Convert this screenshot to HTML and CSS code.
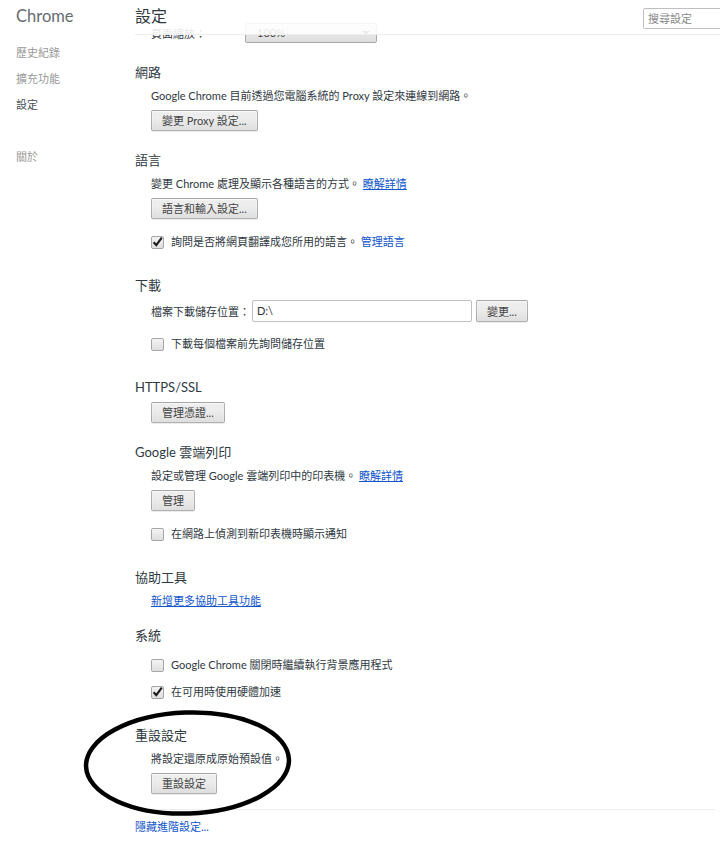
FILE: index.html
```html
<!DOCTYPE html>
<html lang="zh-Hant">
<head>
<meta charset="utf-8">
<title>設定</title>
<link rel="stylesheet" href="styles.css">
</head>
<body>
<div class="page">
  <aside class="sidebar">
    <div class="brand">Chrome</div>
    <ul class="nav">
      <li>歷史紀錄</li>
      <li>擴充功能</li>
      <li class="active">設定</li>
      <li class="about">關於</li>
    </ul>
  </aside>
  <main class="main">
    <header class="header">
      <h1>設定</h1>
      <div class="search">搜尋設定</div>
    </header>
    <div class="content">
      <div class="zoom-row">
        <span class="zoom-label">頁面縮放：</span>
        <div class="select">100%<span class="arrow"></span></div>
      </div>

      <section class="section">
        <h3>網路</h3>
        <div class="desc">Google Chrome 目前透過您電腦系統的 Proxy 設定來連線到網路。</div>
        <div class="btn-row"><button class="btn">變更 Proxy 設定...</button></div>
      </section>

      <section class="section">
        <h3>語言</h3>
        <div class="desc">變更 Chrome 處理及顯示各種語言的方式。 <a href="#" class="ul">瞭解詳情</a></div>
        <div class="btn-row"><button class="btn">語言和輸入設定...</button></div>
        <div class="check"><span class="box"><svg width="14" height="14" viewBox="0 0 14 14"><path d="M2.6 7.2 L5.3 10.2 L10.8 2.6" fill="none" stroke="#1a1a1a" stroke-width="2.1"/></svg></span><span>詢問是否將網頁翻譯成您所用的語言。 <a href="#" class="plain">管理語言</a></span></div>
      </section>

      <section class="section">
        <h3>下載</h3>
        <div class="field-row">
          <span class="field-label">檔案下載儲存位置：</span>
          <div class="input">D:\</div>
          <button class="btn">變更...</button>
        </div>
        <div class="check"><span class="box"></span><span>下載每個檔案前先詢問儲存位置</span></div>
      </section>

      <section class="section">
        <h3>HTTPS/SSL</h3>
        <div class="btn-row"><button class="btn">管理憑證...</button></div>
      </section>

      <section class="section">
        <h3>Google 雲端列印</h3>
        <div class="desc">設定或管理 Google 雲端列印中的印表機。 <a href="#" class="ul">瞭解詳情</a></div>
        <div class="btn-row"><button class="btn">管理</button></div>
        <div class="check"><span class="box"></span><span>在網路上偵測到新印表機時顯示通知</span></div>
      </section>

      <section class="section tight">
        <h3>協助工具</h3>
        <div class="desc"><a href="#" class="ul">新增更多協助工具功能</a></div>
      </section>

      <section class="section">
        <h3>系統</h3>
        <div class="check"><span class="box"></span><span>Google Chrome 關閉時繼續執行背景應用程式</span></div>
        <div class="check"><span class="box"><svg width="14" height="14" viewBox="0 0 14 14"><path d="M2.6 7.2 L5.3 10.2 L10.8 2.6" fill="none" stroke="#1a1a1a" stroke-width="2.1"/></svg></span><span>在可用時使用硬體加速</span></div>
      </section>

      <section class="section">
        <h3>重設設定</h3>
        <div class="desc">將設定還原成原始預設值。</div>
        <div class="btn-row"><button class="btn">重設設定</button></div>
      </section>

      <div class="divider"></div>
      <div class="bottom-link"><a href="#" class="plain">隱藏進階設定...</a></div>
    </div>
  </main>
</div>
<svg class="annotation" width="212" height="110" viewBox="0 0 212 110">
  <ellipse cx="105.5" cy="54" rx="101.5" ry="50.5" fill="none" stroke="#000" stroke-width="4.5" transform="rotate(-2 105.5 54)"/>
</svg>
</body>
</html>
```

FILE: styles.css
```css
html, body {
  margin: 0;
  padding: 0;
}
body {
  font-family: Lato, "Noto Sans CJK TC", sans-serif;
  font-size: 11px;
  color: #303942;
  background: #fff;
  overflow: hidden;
  position: relative;
  width: 720px;
  height: 853px;
}
.page {
  display: flex;
  width: 720px;
  height: 853px;
}
.sidebar {
  width: 135px;
  flex: none;
  padding-left: 16px;
  box-sizing: border-box;
}
.brand {
  font-size: 16.5px;
  line-height: 20px;
  margin-top: 6px;
  color: #666b70;
}
.nav {
  list-style: none;
  margin: 14px 0 0;
  padding: 0;
}
.nav li {
  line-height: 26px;
  color: #999;
}
.nav li.active {
  color: #464e5a;
}
.nav li.about {
  margin-top: 26px;
}
.main {
  flex: 1;
  position: relative;
  min-width: 0;
}
.header {
  position: absolute;
  top: 0;
  left: 0;
  right: 0;
  height: 34px;
  border-bottom: 1px solid #eee;
  background: rgba(255, 255, 255, 0.88);
  display: flex;
  align-items: flex-start;
  z-index: 1;
}
.header h1 {
  flex: 1;
  margin: 6px 0 0;
  font-size: 16px;
  line-height: 20px;
  font-weight: normal;
  color: #303942;
}
.search {
  width: 100px;
  height: 21px;
  margin-top: 8px;
  margin-right: -23px;
  box-sizing: border-box;
  border: 1px solid #bfbfbf;
  border-radius: 2px;
  background: #fff;
  padding-left: 4px;
  line-height: 19px;
  color: #888;
  flex: none;
}
.content {
  padding-top: 23px;
}
.zoom-row {
  display: flex;
  align-items: center;
  padding-left: 16px;
  height: 20px;
}
.zoom-label {
  width: 94px;
}
.select {
  width: 132px;
  height: 20px;
  box-sizing: border-box;
  border: 1px solid #aaa;
  border-radius: 2px;
  background: linear-gradient(#ededed, #dedede);
  padding-left: 11px;
  line-height: 18px;
  position: relative;
  color: #444;
}
.arrow {
  position: absolute;
  right: 6px;
  top: 7px;
  border-left: 4px solid transparent;
  border-right: 4px solid transparent;
  border-top: 4px solid #666;
}
.section {
  margin-top: 19px;
}
.section.tight + .section {
  margin-top: 14px;
}
.section h3 {
  margin: 0;
  font-size: 13px;
  line-height: 20px;
  font-weight: normal;
  color: #303942;
}
.desc, .btn-row, .check, .field-row {
  padding-left: 16px;
}
.desc {
  margin-top: 4px;
  line-height: 20px;
}
.btn-row {
  margin-top: 4px;
  display: flex;
}
.section h3 + .btn-row {
  margin-top: 5px;
}
.btn {
  font-family: inherit;
  font-size: 11px;
  height: 21px;
  padding: 0 10px;
  margin: 0;
  border: 1px solid rgba(0, 0, 0, 0.25);
  border-radius: 2px;
  background: linear-gradient(#ededed, #ededed 38%, #dedede);
  box-shadow: 0 1px 0 rgba(0, 0, 0, 0.08), inset 0 1px 2px rgba(255, 255, 255, 0.75);
  color: #444;
  line-height: 19px;
}
.check {
  display: flex;
  align-items: center;
  line-height: 20px;
  margin-top: 13px;
}
.btn-row + .check {
  margin-top: 13px;
}
.check + .check {
  margin-top: 7px;
}
.section h3 + .check {
  margin-top: 10px;
}
.field-row + .check {
  margin-top: 12px;
}
.check:last-child {
  padding-bottom: 4px;
}
.box {
  width: 13px;
  height: 13px;
  box-sizing: border-box;
  border: 1px solid #a6a6a6;
  border-radius: 2px;
  background: linear-gradient(#f4f4f4, #dedede);
  margin-right: 7px;
  position: relative;
  flex: none;
}
.box svg {
  position: absolute;
  left: -1px;
  top: -2px;
}
.field-row {
  margin-top: 5px;
  display: flex;
  align-items: center;
}
.input {
  width: 220px;
  height: 22px;
  box-sizing: border-box;
  border: 1px solid #bfbfbf;
  border-radius: 2px;
  margin-left: 2px;
  padding-left: 4px;
  line-height: 20px;
  color: #333;
}
.field-row .btn {
  height: 22px;
  margin-left: 4px;
}
a {
  color: #15c;
}
a.plain {
  text-decoration: none;
}
a.ul {
  text-decoration: underline;
}
.divider {
  margin: 15px 5px 0 0;
  border-top: 1px solid #eee;
  height: 0;
}
.bottom-link {
  margin-top: 7px;
  line-height: 20px;
}
.annotation {
  position: absolute;
  left: 82px;
  top: 709px;
  overflow: visible;
  z-index: 2;
}
```
